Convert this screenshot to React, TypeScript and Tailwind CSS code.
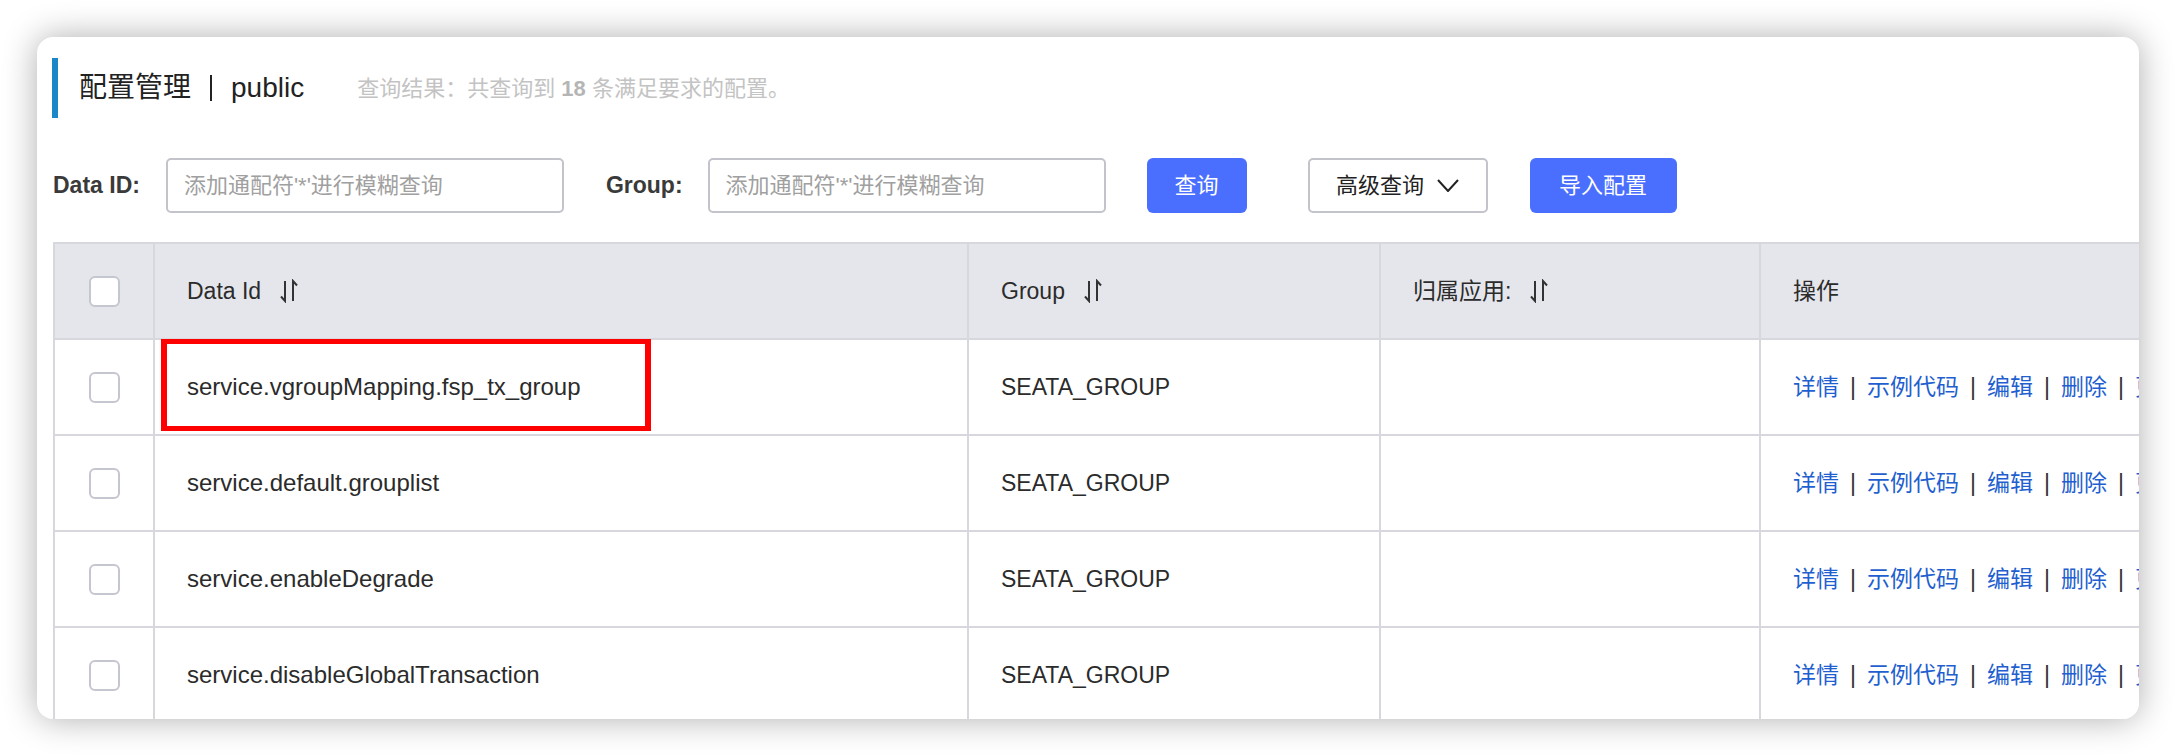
const FONT = 'font-["Liberation_Sans","Noto_Sans_CJK_SC",sans-serif]'

function SortIcon() {
  return (
    <svg width="20" height="24" viewBox="0 0 20 24" className="ml-[18px] shrink-0">
      <path d="M6 2 V22 L2 17.5" fill="none" stroke="#333" strokeWidth="2" />
      <path d="M14 22 V2 L18 6.5" fill="none" stroke="#333" strokeWidth="2" />
    </svg>
  )
}

function Checkbox() {
  return <div className="w-[31px] h-[31px] rounded-[6px] border-2 border-[#c4c6d0] bg-white" />
}

const rows = [
  'service.vgroupMapping.fsp_tx_group',
  'service.default.grouplist',
  'service.enableDegrade',
  'service.disableGlobalTransaction',
]

const actions = ['详情', '示例代码', '编辑', '删除', '更多']

const grid = 'grid grid-cols-[100px_814px_412px_380px_600px] h-[96px] border-t-2 border-[#d7d8dd]'
const cell = 'border-l-2 border-[#d7d8dd] flex items-center pl-[32px]'

export default function App() {
  return (
    <div className={`w-[2176px] h-[756px] bg-white p-[37px] ${FONT}`}>
      <div className="w-full h-full bg-white rounded-[16px] overflow-hidden shadow-[0_0_34px_rgba(0,0,0,0.32)] pl-[16px] pt-[21px]">
        {/* titre */}
        <div className="flex items-center h-[60px] -ml-[1px]">
          <div className="w-[6px] h-full bg-[#1a88c6]" />
          <span className="ml-[21px] text-[28px] text-[#222] flex items-center">
            配置管理
            <span className="mx-[19px] w-[2px] h-[26px] bg-[#222]" />
            public
          </span>
          <span className="ml-[53px] text-[22px] text-[#c3c3c3]">
            查询结果：共查询到 <b className="font-bold text-[#b5b5b5]">18</b> 条满足要求的配置。
          </span>
        </div>

        {/* recherche */}
        <div className="flex items-center h-[55px] mt-[40px] text-[23px]">
          <span className="font-bold text-[#3a3a3a]">Data ID:</span>
          <div className="ml-[26px] w-[398px] h-full border-2 border-[#c2c3cb] rounded-[5px] flex items-center px-[16px] text-[22px] text-[#a0a0a0]">
            添加通配符'*'进行模糊查询
          </div>
          <span className="ml-[42px] font-bold text-[#3a3a3a]">Group:</span>
          <div className="ml-[25px] w-[398px] h-full border-2 border-[#c2c3cb] rounded-[5px] flex items-center px-[16px] text-[22px] text-[#a0a0a0]">
            添加通配符'*'进行模糊查询
          </div>
          <button className="ml-[41px] w-[100px] h-full rounded-[6px] bg-[#4a6fff] text-white text-[22px]">查询</button>
          <button className="ml-[61px] w-[180px] h-full rounded-[5px] border-2 border-[#c2c3cb] bg-white text-[#222] text-[22px] flex items-center justify-center gap-[13px]">
            高级查询
            <svg width="22" height="13" viewBox="0 0 22 13">
              <path d="M1 1 L11 12 L21 1" fill="none" stroke="#222" strokeWidth="2" />
            </svg>
          </button>
          <button className="ml-[42px] w-[147px] h-full rounded-[6px] bg-[#4a6fff] text-white text-[22px]">导入配置</button>
        </div>

        {/* tableau */}
        <div className="mt-[29px] w-max border-r-2 border-[#d7d8dd] text-[23px] text-[#2b2b2b]">
          <div className={`${grid} bg-[#e5e6eb]`}>
            <div className="border-l-2 border-[#d7d8dd] flex items-center justify-center">
              <Checkbox />
            </div>
            <div className={cell}>
              Data Id
              <SortIcon />
            </div>
            <div className={cell}>
              Group
              <SortIcon />
            </div>
            <div className={cell}>
              归属应用:
              <SortIcon />
            </div>
            <div className={cell}>操作</div>
          </div>
          {rows.map((r, i) => (
            <div key={r} className={`${grid} bg-white`}>
              <div className="border-l-2 border-[#d7d8dd] flex items-center justify-center">
                <Checkbox />
              </div>
              <div className={`${cell} relative text-[24px]`}>
                {r}
                {i === 0 && (
                  <div className="absolute left-[6px] -top-[1px] w-[490px] h-[92px] border-x-[6px] border-y-[5px] border-[#ff0000]" />
                )}
              </div>
              <div className={`${cell} text-[23px]`}>SEATA_GROUP</div>
              <div className={cell} />
              <div className={cell}>
                {actions.map((a, j) => (
                  <span key={a} className="flex items-center">
                    {j > 0 && <span className="mx-[11px] text-[#333]">|</span>}
                    <span className="text-[#1f5fcf]">{a}</span>
                  </span>
                ))}
              </div>
            </div>
          ))}
        </div>
      </div>
    </div>
  )
}
